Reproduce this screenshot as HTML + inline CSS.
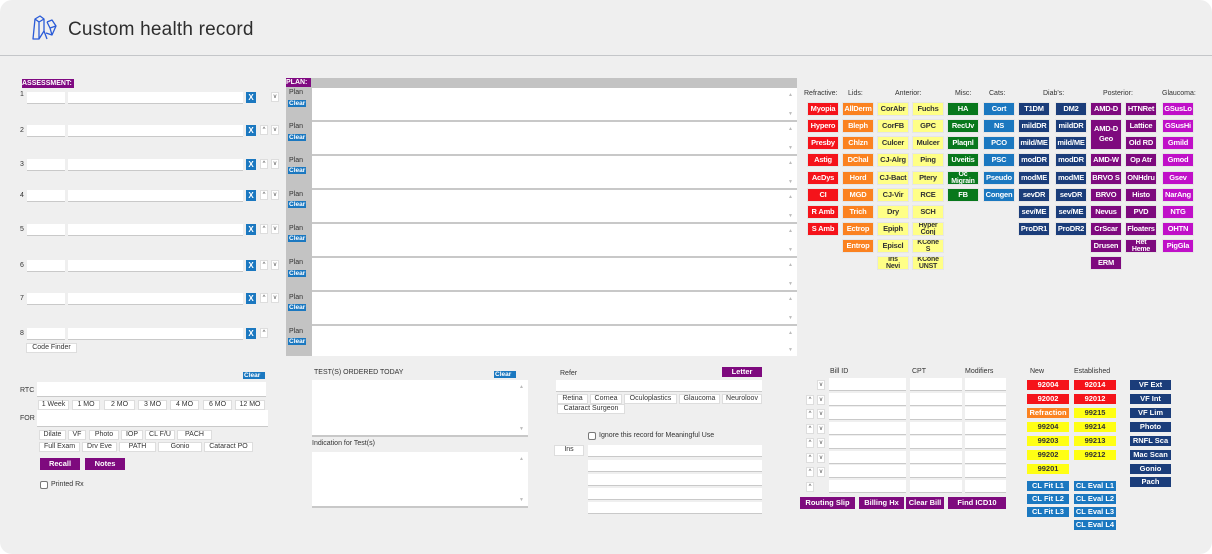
<!DOCTYPE html>
<html><head><meta charset="utf-8">
<style>
*{box-sizing:border-box;margin:0;padding:0}
body{width:1212px;height:554px;background:#fff;font-family:"Liberation Sans",Arial,sans-serif;overflow:hidden;position:relative}
#card{position:absolute;left:0;top:0;width:1212px;height:554px;background:#efefef;border-radius:12px}
#hl{position:absolute;left:0;top:55px;width:1212px;height:1px;background:#c4c6c9}
.a{position:absolute}
.t{position:absolute;font-size:7px;color:#333;white-space:nowrap}
.in{position:absolute;background:#fff;border-bottom:1px solid #c9c9c9;height:12px}
.b{position:absolute;height:12px;width:30px;font-size:7.5px;letter-spacing:-0.2px;font-weight:bold;color:#fff;text-align:center;line-height:12px;white-space:nowrap;overflow:hidden;box-shadow:0 0 0 1px #e6e6e6}
.b2{line-height:6.5px;font-size:7px}
.r{background:#f5131a}.o{background:#fb8220}.y{background:#ffff86;color:#333}.g{background:#08781c}.bl{background:#1b78c0}.n{background:#1b3d7a}.p{background:#7e0a7e}.m{background:#c010c8}
.w{position:absolute;background:#fff;border:1px solid #ddd;font-size:7px;color:#333;text-align:center;height:10px;line-height:8px;white-space:nowrap}
.x{position:absolute;width:10px;height:11px;background:#1b78c0;color:#fff;font-size:8px;font-weight:bold;text-align:center;line-height:11px}
.ar{position:absolute;width:8px;height:10px;background:#fff;border:1px solid #ddd;font-size:6px;color:#444;text-align:center;line-height:9px}
.pl{position:absolute;left:286px;width:26px;background:#c3c3c3}
.cl{position:absolute;background:#1b78c0;color:#fff;font-size:6.5px;font-weight:bold;height:7px;line-height:7px;padding:0 1px}
.ta{position:absolute;left:312px;width:485px;background:#fff;border-bottom:2px solid #c8c8c8}
.ta:before{content:"▲";position:absolute;right:4px;top:4px;font-size:5px;color:#bbb}
.ta:after{content:"▼";position:absolute;right:4px;bottom:3px;font-size:5px;color:#bbb}
.sb{position:absolute;height:10px;font-size:7.5px;font-weight:bold;color:#fff;text-align:center;line-height:10px;white-space:nowrap;overflow:hidden}
.sb.y{background:#ffff14;color:#333}
</style></head><body>
<div id="card"></div>
<svg class="a" style="left:32px;top:14px" width="26" height="27" viewBox="0 0 26 27" fill="none" stroke="#2a5bd7" stroke-width="1.3" stroke-linejoin="round"><path d="M3 5 L8 2 L12 5 L12 17 L7 25 L1 25 Z M3 5 L7 8 L12 5 M7 8 L7 25 M12 17 L15 25 M15 8 L20 6 L24 12 L20 21 L14 19 M15 8 L18 14 L24 12 M18 14 L20 21"/></svg>
<div class="a" style="left:68px;top:19px;font-size:19px;color:#2e2e2e;letter-spacing:0.2px">Custom health record</div>
<div id="hl"></div>

<div class="a" style="left:22px;top:79px;width:52px;height:9px;background:#800a82;color:#fff;font-size:7px;font-weight:bold;line-height:9px">ASSESSMENT:</div>

<div class="t" style="left:20px;top:91px">1</div><div class="in" style="left:27px;top:92px;width:38px"></div><div class="in" style="left:68px;top:92px;width:175px"></div><div class="x" style="left:246px;top:92px">X</div><div class="ar" style="left:271px;top:92px">v</div>
<div class="t" style="left:20px;top:127px">2</div><div class="in" style="left:27px;top:125px;width:38px"></div><div class="in" style="left:68px;top:125px;width:175px"></div><div class="x" style="left:246px;top:125px">X</div><div class="ar" style="left:260px;top:125px">^</div><div class="ar" style="left:271px;top:125px">v</div>
<div class="t" style="left:20px;top:161px">3</div><div class="in" style="left:27px;top:159px;width:38px"></div><div class="in" style="left:68px;top:159px;width:175px"></div><div class="x" style="left:246px;top:159px">X</div><div class="ar" style="left:260px;top:159px">^</div><div class="ar" style="left:271px;top:159px">v</div>
<div class="t" style="left:20px;top:192px">4</div><div class="in" style="left:27px;top:190px;width:38px"></div><div class="in" style="left:68px;top:190px;width:175px"></div><div class="x" style="left:246px;top:190px">X</div><div class="ar" style="left:260px;top:190px">^</div><div class="ar" style="left:271px;top:190px">v</div>
<div class="t" style="left:20px;top:226px">5</div><div class="in" style="left:27px;top:224px;width:38px"></div><div class="in" style="left:68px;top:224px;width:175px"></div><div class="x" style="left:246px;top:224px">X</div><div class="ar" style="left:260px;top:224px">^</div><div class="ar" style="left:271px;top:224px">v</div>
<div class="t" style="left:20px;top:262px">6</div><div class="in" style="left:27px;top:260px;width:38px"></div><div class="in" style="left:68px;top:260px;width:175px"></div><div class="x" style="left:246px;top:260px">X</div><div class="ar" style="left:260px;top:260px">^</div><div class="ar" style="left:271px;top:260px">v</div>
<div class="t" style="left:20px;top:295px">7</div><div class="in" style="left:27px;top:293px;width:38px"></div><div class="in" style="left:68px;top:293px;width:175px"></div><div class="x" style="left:246px;top:293px">X</div><div class="ar" style="left:260px;top:293px">^</div><div class="ar" style="left:271px;top:293px">v</div>
<div class="t" style="left:20px;top:330px">8</div><div class="in" style="left:27px;top:328px;width:38px"></div><div class="in" style="left:68px;top:328px;width:175px"></div><div class="x" style="left:246px;top:328px">X</div><div class="ar" style="left:260px;top:328px">^</div>
<div class="w" style="left:26px;top:343px;width:51px">Code Finder</div>

<div class="a" style="left:286px;top:78px;width:511px;height:10px;background:#c3c3c3"></div>
<div class="a" style="left:286px;top:78px;width:25px;height:9px;background:#800a82;color:#fff;font-size:7px;font-weight:bold;line-height:9px">PLAN:</div>
<div class="pl" style="top:88px;height:268px"></div>
<div class="t" style="left:289px;top:89px">Plan</div><div class="cl" style="left:288px;top:100px">Clear</div>
<div class="t" style="left:289px;top:123px">Plan</div><div class="cl" style="left:288px;top:134px">Clear</div>
<div class="t" style="left:289px;top:157px">Plan</div><div class="cl" style="left:288px;top:167px">Clear</div>
<div class="t" style="left:289px;top:191px">Plan</div><div class="cl" style="left:288px;top:201px">Clear</div>
<div class="t" style="left:289px;top:225px">Plan</div><div class="cl" style="left:288px;top:235px">Clear</div>
<div class="t" style="left:289px;top:259px">Plan</div><div class="cl" style="left:288px;top:270px">Clear</div>
<div class="t" style="left:289px;top:294px">Plan</div><div class="cl" style="left:288px;top:304px">Clear</div>
<div class="t" style="left:289px;top:328px">Plan</div><div class="cl" style="left:288px;top:338px">Clear</div>
<div class="ta" style="top:88px;height:34px"></div>
<div class="ta" style="top:122px;height:34px"></div>
<div class="ta" style="top:156px;height:34px"></div>
<div class="ta" style="top:190px;height:34px"></div>
<div class="ta" style="top:224px;height:34px"></div>
<div class="ta" style="top:258px;height:34px"></div>
<div class="ta" style="top:292px;height:34px"></div>
<div class="ta" style="top:326px;height:30px;border-bottom:none"></div>

<div class="t" style="left:804px;top:90px">Refractive:</div>
<div class="t" style="left:848px;top:90px">Lids:</div>
<div class="t" style="left:895px;top:90px">Anterior:</div>
<div class="t" style="left:955px;top:90px">Misc:</div>
<div class="t" style="left:989px;top:90px">Cats:</div>
<div class="t" style="left:1043px;top:90px">Diab's:</div>
<div class="t" style="left:1103px;top:90px">Posterior:</div>
<div class="t" style="left:1162px;top:90px">Glaucoma:</div>

<div class="b r" style="left:808px;top:103px">Myopia</div>
<div class="b r" style="left:808px;top:120px">Hypero</div>
<div class="b r" style="left:808px;top:137px">Presby</div>
<div class="b r" style="left:808px;top:154px">Astig</div>
<div class="b r" style="left:808px;top:172px">AcDys</div>
<div class="b r" style="left:808px;top:189px">CI</div>
<div class="b r" style="left:808px;top:206px">R Amb</div>
<div class="b r" style="left:808px;top:223px">S Amb</div>
<div class="b o" style="left:843px;top:103px">AllDerm</div>
<div class="b o" style="left:843px;top:120px">Bleph</div>
<div class="b o" style="left:843px;top:137px">Chlzn</div>
<div class="b o" style="left:843px;top:154px">DChal</div>
<div class="b o" style="left:843px;top:172px">Hord</div>
<div class="b o" style="left:843px;top:189px">MGD</div>
<div class="b o" style="left:843px;top:206px">Trich</div>
<div class="b o" style="left:843px;top:223px">Ectrop</div>
<div class="b o" style="left:843px;top:240px">Entrop</div>
<div class="b y" style="left:878px;top:103px">CorAbr</div>
<div class="b y" style="left:878px;top:120px">CorFB</div>
<div class="b y" style="left:878px;top:137px">Culcer</div>
<div class="b y" style="left:878px;top:154px">CJ-Alrg</div>
<div class="b y" style="left:878px;top:172px">CJ-Bact</div>
<div class="b y" style="left:878px;top:189px">CJ-Vir</div>
<div class="b y" style="left:878px;top:206px">Dry</div>
<div class="b y" style="left:878px;top:223px">Epiph</div>
<div class="b y" style="left:878px;top:240px">Episcl</div>
<div class="b y b2" style="left:878px;top:257px">Iris<br>Nevi</div>
<div class="b y" style="left:913px;top:103px">Fuchs</div>
<div class="b y" style="left:913px;top:120px">GPC</div>
<div class="b y" style="left:913px;top:137px">Mulcer</div>
<div class="b y" style="left:913px;top:154px">Ping</div>
<div class="b y" style="left:913px;top:172px">Ptery</div>
<div class="b y" style="left:913px;top:189px">RCE</div>
<div class="b y" style="left:913px;top:206px">SCH</div>
<div class="b y b2" style="left:913px;top:223px">Hyper<br>Conj</div>
<div class="b y b2" style="left:913px;top:240px">KCone<br>S</div>
<div class="b y b2" style="left:913px;top:257px">KCone<br>UNST</div>
<div class="b g" style="left:948px;top:103px">HA</div>
<div class="b g" style="left:948px;top:120px">RecUv</div>
<div class="b g" style="left:948px;top:137px">Plaqnl</div>
<div class="b g" style="left:948px;top:154px">Uveitis</div>
<div class="b g b2" style="left:948px;top:172px">Oc<br>Migrain</div>
<div class="b g" style="left:948px;top:189px">FB</div>
<div class="b bl" style="left:984px;top:103px">Cort</div>
<div class="b bl" style="left:984px;top:120px">NS</div>
<div class="b bl" style="left:984px;top:137px">PCO</div>
<div class="b bl" style="left:984px;top:154px">PSC</div>
<div class="b bl" style="left:984px;top:172px">Pseudo</div>
<div class="b bl" style="left:984px;top:189px">Congen</div>
<div class="b n" style="left:1019px;top:103px">T1DM</div>
<div class="b n" style="left:1019px;top:120px">mildDR</div>
<div class="b n" style="left:1019px;top:137px">mild/ME</div>
<div class="b n" style="left:1019px;top:154px">modDR</div>
<div class="b n" style="left:1019px;top:172px">modME</div>
<div class="b n" style="left:1019px;top:189px">sevDR</div>
<div class="b n" style="left:1019px;top:206px">sev/ME</div>
<div class="b n" style="left:1019px;top:223px">ProDR1</div>
<div class="b n" style="left:1056px;top:103px">DM2</div>
<div class="b n" style="left:1056px;top:120px">mildDR</div>
<div class="b n" style="left:1056px;top:137px">mild/ME</div>
<div class="b n" style="left:1056px;top:154px">modDR</div>
<div class="b n" style="left:1056px;top:172px">modME</div>
<div class="b n" style="left:1056px;top:189px">sevDR</div>
<div class="b n" style="left:1056px;top:206px">sev/ME</div>
<div class="b n" style="left:1056px;top:223px">ProDR2</div>
<div class="b p" style="left:1091px;top:103px">AMD-D</div>
<div class="b p" style="left:1091px;top:120px;height:29px;line-height:10px;padding-top:4px">AMD-D<br>Geo</div>
<div class="b p" style="left:1091px;top:154px">AMD-W</div>
<div class="b p" style="left:1091px;top:172px">BRVO S</div>
<div class="b p" style="left:1091px;top:189px">BRVO</div>
<div class="b p" style="left:1091px;top:206px">Nevus</div>
<div class="b p" style="left:1091px;top:223px">CrScar</div>
<div class="b p" style="left:1091px;top:240px">Drusen</div>
<div class="b p" style="left:1091px;top:257px">ERM</div>
<div class="b p" style="left:1126px;top:103px">HTNRet</div>
<div class="b p" style="left:1126px;top:120px">Lattice</div>
<div class="b p" style="left:1126px;top:137px">Old RD</div>
<div class="b p" style="left:1126px;top:154px">Op Atr</div>
<div class="b p" style="left:1126px;top:172px">ONHdru</div>
<div class="b p" style="left:1126px;top:189px">Histo</div>
<div class="b p" style="left:1126px;top:206px">PVD</div>
<div class="b p" style="left:1126px;top:223px">Floaters</div>
<div class="b p b2" style="left:1126px;top:240px">Ret<br>Heme</div>
<div class="b m" style="left:1163px;top:103px">GSusLo</div>
<div class="b m" style="left:1163px;top:120px">GSusHi</div>
<div class="b m" style="left:1163px;top:137px">Gmild</div>
<div class="b m" style="left:1163px;top:154px">Gmod</div>
<div class="b m" style="left:1163px;top:172px">Gsev</div>
<div class="b m" style="left:1163px;top:189px">NarAng</div>
<div class="b m" style="left:1163px;top:206px">NTG</div>
<div class="b m" style="left:1163px;top:223px">OHTN</div>
<div class="b m" style="left:1163px;top:240px">PigGla</div>

<div class="cl" style="left:243px;top:372px;width:22px">Clear</div>
<div class="t" style="left:20px;top:387px">RTC</div>
<div class="in" style="left:37px;top:382px;width:229px;height:15px"></div>
<div class="w" style="left:38px;top:400px;width:31px">1 Week</div>
<div class="w" style="left:72px;top:400px;width:28px">1 MO</div>
<div class="w" style="left:104px;top:400px;width:31px">2 MO</div>
<div class="w" style="left:138px;top:400px;width:29px">3 MO</div>
<div class="w" style="left:170px;top:400px;width:29px">4 MO</div>
<div class="w" style="left:203px;top:400px;width:29px">6 MO</div>
<div class="w" style="left:235px;top:400px;width:30px">12 MO</div>
<div class="t" style="left:20px;top:415px">FOR</div>
<div class="in" style="left:37px;top:410px;width:231px;height:17px"></div>
<div class="w" style="left:39px;top:430px;width:27px">Dilate</div>
<div class="w" style="left:68px;top:430px;width:18px">VF</div>
<div class="w" style="left:89px;top:430px;width:30px">Photo</div>
<div class="w" style="left:121px;top:430px;width:22px">IOP</div>
<div class="w" style="left:145px;top:430px;width:30px">CL F/U</div>
<div class="w" style="left:177px;top:430px;width:35px">PACH</div>
<div class="w" style="left:39px;top:442px;width:41px">Full Exam</div>
<div class="w" style="left:82px;top:442px;width:35px">Drv Eve</div>
<div class="w" style="left:119px;top:442px;width:37px">PATH</div>
<div class="w" style="left:158px;top:442px;width:44px">Gonio</div>
<div class="w" style="left:204px;top:442px;width:49px">Cataract PO</div>
<div class="sb p" style="left:40px;top:458px;width:40px;height:12px;line-height:12px">Recall</div>
<div class="sb p" style="left:85px;top:458px;width:40px;height:12px;line-height:12px">Notes</div>
<div class="a" style="left:40px;top:481px;width:8px;height:8px;border:1px solid #777;border-radius:2px;background:#fff"></div>
<div class="t" style="left:51px;top:481px">Printed Rx</div>

<div class="t" style="left:314px;top:369px">TEST(S) ORDERED TODAY</div>
<div class="cl" style="left:494px;top:371px;width:22px">Clear</div>
<div class="ta" style="left:312px;top:380px;width:216px;height:57px"></div>
<div class="t" style="left:312px;top:440px">Indication for Test(s)</div>
<div class="ta" style="left:312px;top:452px;width:216px;height:56px"></div>

<div class="t" style="left:560px;top:370px">Refer</div>
<div class="sb p" style="left:722px;top:367px;width:40px">Letter</div>
<div class="in" style="left:556px;top:380px;width:206px"></div>
<div class="w" style="left:557px;top:394px;width:31px">Retina</div>
<div class="w" style="left:590px;top:394px;width:32px">Cornea</div>
<div class="w" style="left:624px;top:394px;width:53px">Oculoplastics</div>
<div class="w" style="left:679px;top:394px;width:41px">Glaucoma</div>
<div class="w" style="left:722px;top:394px;width:40px">Neuroloov</div>
<div class="w" style="left:557px;top:404px;width:68px">Cataract Surgeon</div>
<div class="a" style="left:588px;top:432px;width:8px;height:8px;border:1px solid #777;border-radius:2px;background:#fff"></div>
<div class="t" style="left:599px;top:432px">Ignore this record for Meaningful Use</div>
<div class="w" style="left:554px;top:445px;width:30px;height:11px">Ins</div>
<div class="in" style="left:588px;top:445px;width:174px"></div>
<div class="in" style="left:588px;top:460px;width:174px"></div>
<div class="in" style="left:588px;top:474px;width:174px"></div>
<div class="in" style="left:588px;top:488px;width:174px"></div>
<div class="in" style="left:588px;top:502px;width:174px"></div>

<div class="t" style="left:830px;top:368px">Bill ID</div>
<div class="t" style="left:912px;top:368px">CPT</div>
<div class="t" style="left:965px;top:368px">Modifiers</div>
<div class="ar" style="left:817px;top:380px">v</div>
<div class="in" style="left:829px;top:378px;width:77px;height:13px"></div><div class="in" style="left:910px;top:378px;width:52px;height:13px"></div><div class="in" style="left:965px;top:378px;width:41px;height:13px"></div>
<div class="ar" style="left:806px;top:395px">^</div><div class="ar" style="left:817px;top:395px">v</div>
<div class="in" style="left:829px;top:393px;width:77px;height:13px"></div><div class="in" style="left:910px;top:393px;width:52px;height:13px"></div><div class="in" style="left:965px;top:393px;width:41px;height:13px"></div>
<div class="ar" style="left:806px;top:409px">^</div><div class="ar" style="left:817px;top:409px">v</div>
<div class="in" style="left:829px;top:407px;width:77px;height:13px"></div><div class="in" style="left:910px;top:407px;width:52px;height:13px"></div><div class="in" style="left:965px;top:407px;width:41px;height:13px"></div>
<div class="ar" style="left:806px;top:424px">^</div><div class="ar" style="left:817px;top:424px">v</div>
<div class="in" style="left:829px;top:422px;width:77px;height:13px"></div><div class="in" style="left:910px;top:422px;width:52px;height:13px"></div><div class="in" style="left:965px;top:422px;width:41px;height:13px"></div>
<div class="ar" style="left:806px;top:438px">^</div><div class="ar" style="left:817px;top:438px">v</div>
<div class="in" style="left:829px;top:436px;width:77px;height:13px"></div><div class="in" style="left:910px;top:436px;width:52px;height:13px"></div><div class="in" style="left:965px;top:436px;width:41px;height:13px"></div>
<div class="ar" style="left:806px;top:453px">^</div><div class="ar" style="left:817px;top:453px">v</div>
<div class="in" style="left:829px;top:451px;width:77px;height:13px"></div><div class="in" style="left:910px;top:451px;width:52px;height:13px"></div><div class="in" style="left:965px;top:451px;width:41px;height:13px"></div>
<div class="ar" style="left:806px;top:467px">^</div><div class="ar" style="left:817px;top:467px">v</div>
<div class="in" style="left:829px;top:465px;width:77px;height:13px"></div><div class="in" style="left:910px;top:465px;width:52px;height:13px"></div><div class="in" style="left:965px;top:465px;width:41px;height:13px"></div>
<div class="ar" style="left:806px;top:482px">^</div>
<div class="in" style="left:829px;top:480px;width:77px;height:13px"></div><div class="in" style="left:910px;top:480px;width:52px;height:13px"></div><div class="in" style="left:965px;top:480px;width:41px;height:13px"></div>
<div class="sb p" style="left:800px;top:497px;width:55px;height:12px;line-height:12px">Routing Slip</div>
<div class="sb p" style="left:859px;top:497px;width:45px;height:12px;line-height:12px">Billing Hx</div>
<div class="sb p" style="left:906px;top:497px;width:38px;height:12px;line-height:12px">Clear Bill</div>
<div class="sb p" style="left:948px;top:497px;width:58px;height:12px;line-height:12px">Find ICD10</div>

<div class="t" style="left:1030px;top:368px">New</div>
<div class="t" style="left:1074px;top:368px">Established</div>
<div class="sb r" style="left:1027px;top:380px;width:42px">92004</div>
<div class="sb r" style="left:1027px;top:394px;width:42px">92002</div>
<div class="sb o" style="left:1027px;top:408px;width:42px">Refraction</div>
<div class="sb y" style="left:1027px;top:422px;width:42px">99204</div>
<div class="sb y" style="left:1027px;top:436px;width:42px">99203</div>
<div class="sb y" style="left:1027px;top:450px;width:42px">99202</div>
<div class="sb y" style="left:1027px;top:464px;width:42px">99201</div>
<div class="sb r" style="left:1074px;top:380px;width:42px">92014</div>
<div class="sb r" style="left:1074px;top:394px;width:42px">92012</div>
<div class="sb y" style="left:1074px;top:408px;width:42px">99215</div>
<div class="sb y" style="left:1074px;top:422px;width:42px">99214</div>
<div class="sb y" style="left:1074px;top:436px;width:42px">99213</div>
<div class="sb y" style="left:1074px;top:450px;width:42px">99212</div>
<div class="sb bl" style="left:1027px;top:481px;width:42px">CL Fit L1</div>
<div class="sb bl" style="left:1027px;top:494px;width:42px">CL Fit L2</div>
<div class="sb bl" style="left:1027px;top:507px;width:42px">CL Fit L3</div>
<div class="sb bl" style="left:1074px;top:481px;width:42px">CL Eval L1</div>
<div class="sb bl" style="left:1074px;top:494px;width:42px">CL Eval L2</div>
<div class="sb bl" style="left:1074px;top:507px;width:42px">CL Eval L3</div>
<div class="sb bl" style="left:1074px;top:520px;width:42px">CL Eval L4</div>
<div class="sb n" style="left:1130px;top:380px;width:41px">VF Ext</div>
<div class="sb n" style="left:1130px;top:394px;width:41px">VF Int</div>
<div class="sb n" style="left:1130px;top:408px;width:41px">VF Lim</div>
<div class="sb n" style="left:1130px;top:422px;width:41px">Photo</div>
<div class="sb n" style="left:1130px;top:436px;width:41px">RNFL Sca</div>
<div class="sb n" style="left:1130px;top:450px;width:41px">Mac Scan</div>
<div class="sb n" style="left:1130px;top:464px;width:41px">Gonio</div>
<div class="sb n" style="left:1130px;top:477px;width:41px">Pach</div>
</body></html>
